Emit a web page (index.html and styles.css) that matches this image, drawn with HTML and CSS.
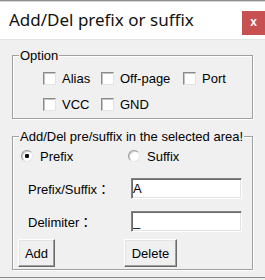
FILE: index.html
```html
<!DOCTYPE html>
<html lang="en">
  <head>
    <meta charset="utf-8" />
    <title>Add/Del prefix or suffix</title>
    <link rel="stylesheet" href="styles.css">
  </head>
  <body>
    <div class="window">
      <div class="titlebar">
        <span class="title">Add/Del prefix or suffix</span>
        <span class="close">x</span>
      </div>
      <div class="client">
        <fieldset class="group option">
          <legend>Option</legend>
          <div class="checks">
            <label class="check"><input type="checkbox" />Alias</label>
            <label class="check"><input type="checkbox" />Off-page</label>
            <label class="check"><input type="checkbox" />Port</label>
            <label class="check"><input type="checkbox" />VCC</label>
            <label class="check"><input type="checkbox" />GND</label>
          </div>
        </fieldset>
        <fieldset class="group edit">
          <legend>Add/Del pre/suffix in the selected area!</legend>
          <div class="radios">
            <label class="radio"><input type="radio" name="mode" checked />Prefix</label>
            <label class="radio"><input type="radio" name="mode" />Suffix</label>
          </div>
          <div class="fields">
            <label class="field-label">Prefix/Suffix：</label>
            <input class="text" type="text" value="A" />
            <label class="field-label">Delimiter：</label>
            <input class="text" type="text" value="_" />
          </div>
          <div class="buttons">
            <button class="btn btn-add">Add</button>
            <button class="btn btn-delete">Delete</button>
          </div>
        </fieldset>
      </div>
    </div>
  </body>
</html>
```

FILE: styles.css
```css
html {
  background: #f0f0f0;
}
body {
  margin: 0;
  font: 13px "Liberation Sans", "Noto Sans CJK TC", sans-serif;
  color: #000;
}
.window {
  width: 265px;
  height: 280px;
  display: flex;
  flex-direction: column;
}
.titlebar {
  height: 39px;
  box-sizing: border-box;
  border-top: 1px solid #8f8f8f;
  box-shadow: inset 0 1px 0 #d6d6d6;
  background: #fff;
  display: flex;
  align-items: flex-start;
  padding-left: 9px;
}
.title {
  flex: 1;
  margin-top: 9px;
  font: 17px/20px "Noto Sans", sans-serif;
  color: #111;
}
.close {
  width: 23px;
  height: 24px;
  margin-top: 10px;
  background: #c75050;
  color: #fff;
  font: bold 12px/23px "Liberation Sans", sans-serif;
  text-align: center;
}
.client {
  flex: none;
  height: 239px;
  box-sizing: border-box;
  border-top: 1px solid #e3e3e3;
  border-bottom: 1px solid #8a8a8a;
  background: #f0f0f0;
  padding: 8px 0 0 12px;
}
.group {
  width: 241px;
  box-sizing: border-box;
  min-width: 0;
  margin: 0;
  padding: 0;
  border: 1px solid #a0a0a0;
  box-shadow: 1px 1px 0 #fff, inset 1px 1px 0 #fff;
}
.group legend {
  margin-left: 6px;
  padding: 0 1px;
  line-height: 15px;
  background: #f0f0f0;
  white-space: nowrap;
}
.edit {
  margin-top: 10px;
}
.checks {
  display: grid;
  grid-template-columns: 58px 82px auto;
  grid-auto-rows: 20px;
  row-gap: 6px;
  padding: 5px 0 4px 30px;
}
.check,
.radio {
  display: flex;
  align-items: center;
  gap: 6px;
}
.check input,
.radio input {
  appearance: none;
  margin: 0;
  flex: none;
  background: #fff;
  border: 1px solid;
}
.check input {
  width: 13px;
  height: 13px;
  border-color: #8a8a8a #e3e3e3 #e3e3e3 #8a8a8a;
  box-shadow: inset 1px 1px 0 #c4c4c4;
}
.radios {
  display: grid;
  grid-template-columns: 107px auto;
  height: 20px;
  margin-top: 2px;
  padding-left: 8px;
}
.radio {
  gap: 7px;
}
.radio input {
  width: 12px;
  height: 12px;
  border-radius: 50%;
  border-color: #9a9a9a #e6e6e6 #e6e6e6 #9a9a9a;
  box-shadow: inset 1px 1px 0 #cfcfcf;
}
.radio input:checked {
  background: radial-gradient(circle, #111 0 2px, #fff 2.5px);
}
.fields {
  display: grid;
  grid-template-columns: 103px 111px;
  grid-auto-rows: 21px;
  row-gap: 12px;
  align-items: center;
  margin-top: 12px;
  padding-left: 15px;
}
.field-label {
  font-family: "Liberation Sans", "Noto Sans CJK TC", sans-serif;
}
.text {
  width: 111px;
  height: 21px;
  box-sizing: border-box;
  margin: 0;
  padding: 0 0 0 1px;
  font: 13px "Liberation Sans", sans-serif;
  background: #fff;
  border: 1px solid;
  border-color: #838383 #fff #fff #838383;
  box-shadow: inset 1px 1px 0 #6a6a6a, inset -1px -1px 0 #e3e3e3;
  outline: none;
}
.buttons {
  display: flex;
  gap: 69px;
  margin-top: 7px;
  padding: 0 0 2px 5px;
}
.btn {
  height: 28px;
  box-sizing: border-box;
  padding: 0;
  font: 13px "Liberation Sans", sans-serif;
  color: #000;
  background: #f0f0f0;
  border: 1px solid;
  border-color: #fff #696969 #696969 #fff;
  box-shadow: inset -1px -1px 0 #a0a0a0, inset 1px 1px 0 #e3e3e3;
}
.btn-add {
  width: 37px;
}
.btn-delete {
  width: 53px;
}
```
